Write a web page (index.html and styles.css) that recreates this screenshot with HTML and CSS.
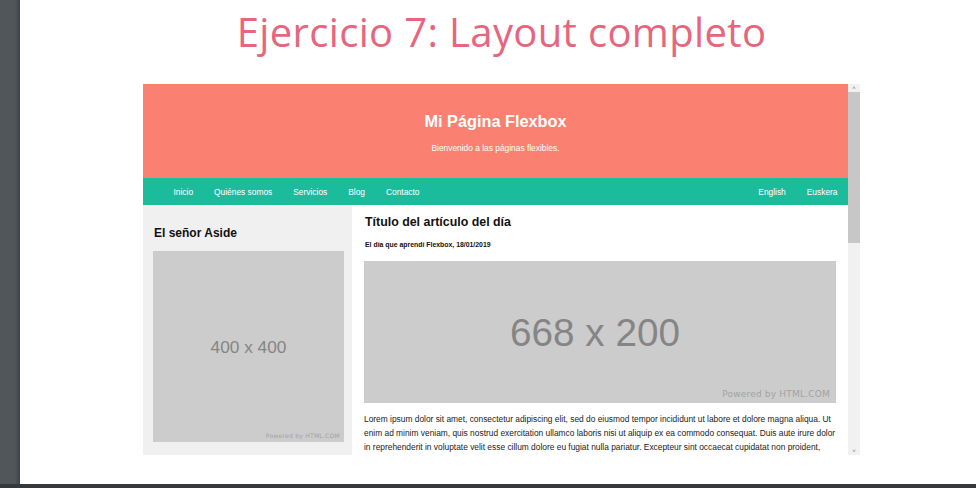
FILE: index.html
```html
<!DOCTYPE html>
<html lang="es">
<head>
<meta charset="utf-8">
<title>Ejercicio 7</title>
<link rel="stylesheet" href="styles.css">
</head>
<body>
<div class="screen">
  <div class="sidebar-strip"></div>
  <div class="slide">
    <h1 class="slide-title">Ejercicio 7: Layout completo</h1>
    <div class="frame">
      <div class="page">
        <header class="site-header">
          <h2 class="site-title">Mi Página Flexbox</h2>
          <p class="site-sub">Bienvenido a las páginas flexibles.</p>
        </header>
        <nav class="site-nav">
          <ul class="nav-left">
            <li>Inicio</li>
            <li>Quiénes somos</li>
            <li>Servicios</li>
            <li>Blog</li>
            <li>Contacto</li>
          </ul>
          <ul class="nav-right">
            <li>English</li>
            <li>Euskera</li>
          </ul>
        </nav>
        <main class="site-main">
          <aside class="aside">
            <h3 class="aside-title">El señor Aside</h3>
            <div class="ph ph-square">
              <span class="ph-size ph-size-sm">400 x 400</span>
              <span class="ph-powered ph-powered-sm">Powered by HTML.COM</span>
            </div>
            <p class="aside-text">Hic chorus ipsi sit humus et aurum pedes velit illis nunc tempus quis dolor amet.</p>
          </aside>
          <article class="article">
            <h3 class="article-title">Título del artículo del día</h3>
            <p class="article-meta">El día que aprendí Flexbox, 18/01/2019</p>
            <div class="ph ph-wide">
              <span class="ph-size ph-size-lg">668 x 200</span>
              <span class="ph-powered ph-powered-lg">Powered by HTML.COM</span>
            </div>
            <p class="article-text">Lorem ipsum dolor sit amet, consectetur adipiscing elit, sed do eiusmod tempor incididunt ut labore et dolore magna aliqua. Ut enim ad minim veniam, quis nostrud exercitation ullamco laboris nisi ut aliquip ex ea commodo consequat. Duis aute irure dolor in reprehenderit in voluptate velit esse cillum dolore eu fugiat nulla pariatur. Excepteur sint occaecat cupidatat non proident, sunt in culpa qui officia deserunt mollit anim id est laborum.</p>
          </article>
        </main>
      </div>
      <div class="scrollbar">
        <div class="sb-arrow">&#708;</div>
        <div class="sb-track"><div class="sb-thumb"></div></div>
        <div class="sb-arrow">&#709;</div>
      </div>
    </div>
  </div>
</div>
</body>
</html>
```
FILE: styles.css
```css
* { box-sizing: border-box; }
html, body { margin: 0; padding: 0; }
body {
  width: 976px;
  height: 488px;
  overflow: hidden;
  background: #36393b;
  font-family: "Liberation Sans", Arial, sans-serif;
}
.screen {
  display: flex;
  height: 484px;
}
.sidebar-strip {
  width: 20px;
  background: linear-gradient(to right, #50565a 0, #50565a 15px, #3f4346 20px);
}
.slide {
  flex: 1;
  background: #fff;
  display: flex;
  flex-direction: column;
  align-items: center;
  padding-left: 7px;
}
.slide-title {
  margin: 6px 0 0;
  height: 78px;
  font-family: "Open Sans", sans-serif;
  font-weight: 400;
  font-size: 40px;
  line-height: 52px;
  color: #e6667d;
  letter-spacing: 0.35px;
}
.frame {
  width: 717px;
  height: 371px;
  display: flex;
  overflow: hidden;
  background: #fff;
}
.page {
  flex: 1;
  overflow: hidden;
  display: flex;
  flex-direction: column;
}
.site-header {
  height: 94px;
  flex: none;
  background: #fa8072;
  color: #fff;
  text-align: center;
  padding-top: 27px;
}
.site-title {
  margin: 0;
  font-size: 16.3px;
  line-height: 20px;
  font-weight: 700;
}
.site-sub {
  margin: 12px 0 0;
  font-size: 8.4px;
  line-height: 11px;
}
.site-nav {
  height: 27px;
  flex: none;
  background: #1abc9c;
  display: flex;
  justify-content: space-between;
  align-items: center;
  padding-left: 20px;
}
.site-nav ul {
  display: flex;
  margin: 0;
  padding: 0;
  list-style: none;
}
.site-nav li {
  color: #fff;
  font-size: 8.4px;
  padding: 0 10.5px;
}
.site-main {
  display: flex;
  flex: 1;
}
.aside {
  width: 209px;
  flex: none;
  background: #f0f0f0;
  padding: 21px 8px 0 10px;
}
.aside-title {
  margin: 0 0 11px 1px;
  font-size: 12px;
  line-height: 14px;
  color: #111;
}
.ph {
  position: relative;
  background: #cccccc;
  display: flex;
  align-items: center;
  justify-content: center;
}
.ph-square { width: 191px; height: 191px; }
.ph-wide { width: 472px; height: 142px; }
.ph-size {
  color: #858585;
  font-family: "Liberation Sans", Arial, sans-serif;
}
.ph-size-sm { font-size: 17.3px; margin-top: 2px; }
.ph-size-lg { font-size: 38.7px; margin: 2px 10px 0 0; }
.ph-powered {
  position: absolute;
  right: 4px;
  color: #a3a3a3;
  font-family: "DejaVu Sans", sans-serif;
  letter-spacing: 0.2px;
}
.ph-powered-sm { font-size: 6.1px; bottom: 3px; }
.ph-powered-lg { font-size: 9px; bottom: 4px; right: 6px; }
.aside-text {
  margin: 11px 0 0;
  font-size: 8.4px;
  line-height: 14px;
  color: #222;
}
.article {
  flex: 1;
  background: #fff;
  padding: 9px 11px 0 12px;
}
.article-title {
  margin: 0 0 0 1px;
  font-size: 12.4px;
  line-height: 16px;
  color: #111;
}
.article-meta {
  margin: 11px 0 0 1px;
  font-size: 6.9px;
  line-height: 8px;
  font-weight: 700;
  color: #111;
}
.ph-wide { margin-top: 12px; }
.article-text {
  margin: 9px 0 0;
  font-size: 8.4px;
  line-height: 14px;
  color: #222;
}
.scrollbar {
  width: 12px;
  flex: none;
  background: #f1f1f1;
  display: flex;
  flex-direction: column;
}
.sb-arrow {
  height: 8px;
  font-size: 6px;
  line-height: 8px;
  color: #777;
  text-align: center;
}
.sb-track {
  flex: 1;
}
.sb-thumb {
  height: 151px;
  background: #c7c7c7;
}
```
